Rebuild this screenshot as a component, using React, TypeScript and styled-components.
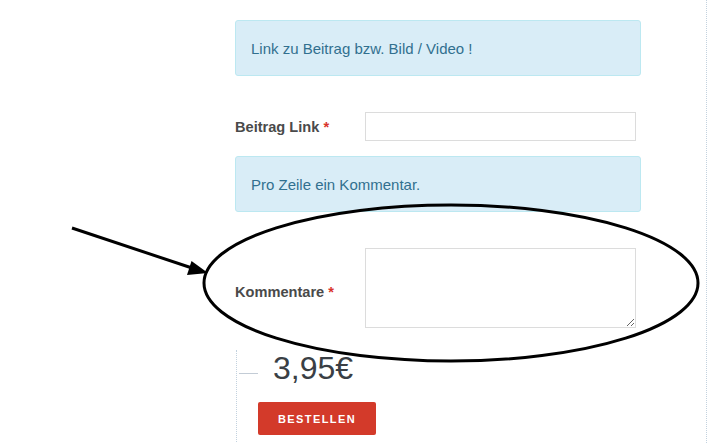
import styled, { createGlobalStyle } from 'styled-components';

const GlobalStyle = createGlobalStyle`
  body {
    margin: 0;
    background: #fff;
    font-family: 'Liberation Sans', Arial, Helvetica, sans-serif;
  }
`;

const Page = styled.div`
  position: relative;
  width: 706px;
  height: 443px;
  overflow: hidden;
  border-right: 1px dotted #c3d2df;
`;

const Column = styled.div`
  margin-left: 235px;
  width: 406px;
  padding-top: 20px;
  display: flex;
  flex-direction: column;
`;

const Alert = styled.div<{ $gap?: number }>`
  box-sizing: border-box;
  height: 56px;
  margin-top: ${(p) => p.$gap ?? 0}px;
  padding: 0 15px;
  display: flex;
  align-items: center;
  background: #d9edf7;
  border: 1px solid #bce8f1;
  border-radius: 3px;
  color: #31708f;
  font-size: 15px;
`;

const FormRow = styled.div<{ $gap: number }>`
  display: flex;
  align-items: center;
  margin-top: ${(p) => p.$gap}px;
  padding-right: 5px;
`;

const Label = styled.label<{ $shift?: number }>`
  width: 130px;
  flex-shrink: 0;
  font-size: 14.6px;
  font-weight: bold;
  color: #4a4a4a;
  padding-top: ${(p) => p.$shift ?? 0}px;
`;

const Req = styled.span`
  color: #d9342b;
`;

const TextInput = styled.input`
  box-sizing: border-box;
  flex: 1;
  height: 29px;
  border: 1px solid #dcdcdc;
  outline: none;
  background: #fff;
`;

const TextArea = styled.textarea`
  box-sizing: border-box;
  flex: 1;
  height: 80px;
  border: 1px solid #dcdcdc;
  outline: none;
  background: #fff;
  resize: both;
`;

const PriceBlock = styled.div`
  margin-top: 22px;
  margin-left: 1px;
  height: 100px;
  border-left: 1px dotted #c3d2df;
  display: flex;
  flex-direction: column;
  align-items: flex-start;
`;

const PriceRow = styled.div`
  display: flex;
  align-items: center;
  padding-left: 2px;
  gap: 15px;
`;

const Tick = styled.span`
  width: 19px;
  height: 1px;
  margin-top: 9px;
  background: #c3ccd6;
`;

const Price = styled.div`
  font-size: 32px;
  color: #3a3f45;
  line-height: 37px;
`;

const OrderButton = styled.button`
  margin: 15px 0 0 21px;
  width: 118px;
  height: 33px;
  border: none;
  border-radius: 2px;
  background: #d33a2a;
  color: #fff;
  font-family: 'Liberation Sans', Arial, sans-serif;
  font-size: 11px;
  font-weight: bold;
  letter-spacing: 1.4px;
`;

const Overlay = styled.svg`
  position: absolute;
  inset: 0;
  pointer-events: none;
`;

export default function App() {
  return (
    <>
      <GlobalStyle />
      <Page>
        <Column>
          <Alert>Link zu Beitrag bzw. Bild / Video !</Alert>
          <FormRow $gap={36}>
            <Label>
              Beitrag Link <Req>*</Req>
            </Label>
            <TextInput type="text" />
          </FormRow>
          <Alert $gap={15}>Pro Zeile ein Kommentar.</Alert>
          <FormRow $gap={36}>
            <Label $shift={8}>
              Kommentare <Req>*</Req>
            </Label>
            <TextArea />
          </FormRow>
          <PriceBlock>
            <PriceRow>
              <Tick />
              <Price>3,95€</Price>
            </PriceRow>
            <OrderButton>BESTELLEN</OrderButton>
          </PriceBlock>
        </Column>
        {/* hand-drawn annotation on top of the form */}
        <Overlay width="708" height="443" viewBox="0 0 708 443">
          <ellipse cx="451" cy="283" rx="247" ry="78" fill="none" stroke="#000" strokeWidth="3" />
          <line x1="72" y1="228" x2="195" y2="269" stroke="#000" strokeWidth="3" />
          <polygon points="208,273 191.5,261 187,275" fill="#000" />
        </Overlay>
      </Page>
    </>
  );
}
